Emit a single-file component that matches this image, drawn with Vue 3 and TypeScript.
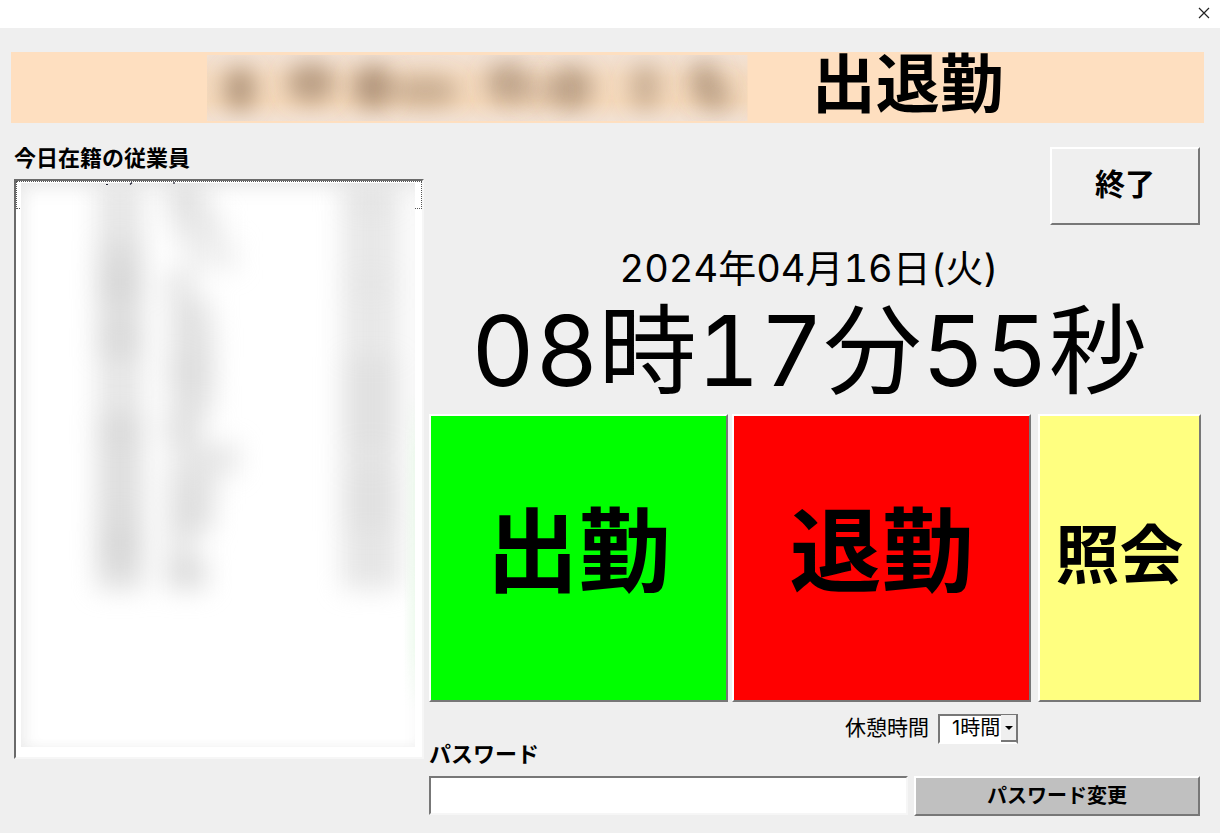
<script setup lang="ts">
import { ref } from 'vue'

interface Blob {
  cx: number
  cy: number
  rx: number
  ry: number
  o: number
}

interface Row {
  family: number
  given: number
  width: number
  indent: number
  time: number
}

const dateText = ref('2024年04月16日(火)')
const timeText = ref('08時17分55秒')
const password = ref('')
const breakTime = ref('1時間')
const breakOptions = ['なし', '1時間']

const blobs: Blob[] = [
  { cx: 33, cy: 34, rx: 16, ry: 22, o: 0.6 },
  { cx: 104, cy: 28, rx: 24, ry: 20, o: 0.55 },
  { cx: 166, cy: 32, rx: 21, ry: 22, o: 0.62 },
  { cx: 218, cy: 36, rx: 34, ry: 16, o: 0.4 },
  { cx: 300, cy: 28, rx: 22, ry: 21, o: 0.46 },
  { cx: 364, cy: 33, rx: 22, ry: 22, o: 0.5 },
  { cx: 330, cy: 36, rx: 26, ry: 16, o: 0.2 },
  { cx: 438, cy: 32, rx: 15, ry: 24, o: 0.38 },
  { cx: 497, cy: 26, rx: 15, ry: 20, o: 0.48 },
  { cx: 509, cy: 42, rx: 16, ry: 16, o: 0.38 },
]

const rows: Row[] = [
  { family: 0.5, given: 0.6, width: 40, indent: 0, time: 0.55 },
  { family: 0.5, given: 0.45, width: 50, indent: 6, time: 0.45 },
  { family: 0.7, given: 0.3, width: 54, indent: 18, time: 0.45 },
  { family: 0.8, given: 0.5, width: 28, indent: 0, time: 0.5 },
  { family: 0.65, given: 0.6, width: 40, indent: 4, time: 0.45 },
  { family: 0.75, given: 0.6, width: 44, indent: 4, time: 0.45 },
  { family: 0.5, given: 0.65, width: 46, indent: 2, time: 0.6 },
  { family: 0.5, given: 0.6, width: 42, indent: 4, time: 0.6 },
  { family: 0.75, given: 0.6, width: 36, indent: 0, time: 0.6 },
  { family: 0.65, given: 0.5, width: 68, indent: 4, time: 0.55 },
  { family: 0.65, given: 0.6, width: 48, indent: 2, time: 0.6 },
  { family: 0.7, given: 0.65, width: 44, indent: 2, time: 0.6 },
  { family: 0.8, given: 0.45, width: 32, indent: 0, time: 0.5 },
  { family: 0.65, given: 0.7, width: 40, indent: 0, time: 0.5 },
]
</script>

<template>
  <div class="window">
    <header class="titlebar">
      <button class="close" type="button" aria-label="閉じる">
        <svg width="12" height="12" viewBox="0 0 12 12" aria-hidden="true">
          <path d="M1 1 11 11M11 1 1 11" fill="none" stroke="#222" stroke-width="1.2" />
        </svg>
      </button>
    </header>

    <main class="form">
      <div class="banner">
        <svg class="company" viewBox="0 0 540 66" preserveAspectRatio="none" aria-hidden="true">
          <defs>
            <linearGradient id="haze" x1="0" y1="0" x2="0" y2="1">
              <stop offset="0" stop-color="#f2e1d3" />
              <stop offset="0.35" stop-color="#f4dabf" />
              <stop offset="0.7" stop-color="#f5d9bb" />
              <stop offset="1" stop-color="#f2e1d3" />
            </linearGradient>
            <filter id="soft" x="-100%" y="-100%" width="300%" height="300%">
              <feGaussianBlur stdDeviation="11" />
            </filter>
          </defs>
          <rect width="540" height="66" fill="url(#haze)" />
          <ellipse
            v-for="(b, i) in blobs"
            :key="i"
            :cx="b.cx"
            :cy="b.cy"
            :rx="b.rx"
            :ry="b.ry"
            :fill-opacity="b.o"
            fill="#8a6e55"
            filter="url(#soft)"
          />
        </svg>
        <h1 class="title">出退勤</h1>
      </div>

      <div class="columns">
        <section class="staff">
          <h2 id="staff-label" class="caption">今日在籍の従業員</h2>
          <div class="listbox" role="listbox" aria-labelledby="staff-label" tabindex="0">
            <div class="focus-row"></div>
            <div class="veil">
              <div class="entries">
                <div v-for="(r, i) in rows" :key="i" class="entry" role="option">
                  <span class="smudge family" :style="{ opacity: r.family }"></span>
                  <span class="given">
                    <span
                      class="smudge"
                      :style="{ opacity: r.given, width: r.width + 'px', marginLeft: r.indent + 'px' }"
                    ></span>
                  </span>
                  <span class="smudge time" :style="{ opacity: r.time }"></span>
                </div>
              </div>
              <div class="tint"></div>
            </div>
            <svg class="ticks" width="72" height="3" viewBox="0 0 72 3" aria-hidden="true">
              <path d="M0 2.5h2M24 2.5l2-2M68 0v2" stroke="#223" stroke-width="1.2" fill="none" />
            </svg>
          </div>
        </section>

        <section class="clocking">
          <button class="bevel quit" type="button">終了</button>
          <div class="date">{{ dateText }}</div>
          <div class="clock">{{ timeText }}</div>

          <div class="actions">
            <button class="bevel action in" type="button">出勤</button>
            <button class="bevel action out" type="button">退勤</button>
            <button class="bevel action query" type="button">照会</button>
          </div>

          <div class="break">
            <label for="break-time">休憩時間</label>
            <div class="combo">
              <select id="break-time" v-model="breakTime">
                <option v-for="o in breakOptions" :key="o" :value="o">{{ o }}</option>
              </select>
              <span class="arrow" aria-hidden="true">
                <svg width="8" height="4" viewBox="0 0 8 4"><path d="M0 0h8L4 4z" fill="#000" /></svg>
              </span>
            </div>
          </div>

          <label class="caption password-label" for="password">パスワード</label>
          <div class="password-row">
            <input id="password" v-model="password" type="password" />
            <button class="bevel change" type="button">パスワード変更</button>
          </div>
        </section>
      </div>
    </main>
  </div>
</template>

<style>
body {
  margin: 0;
  background: #efefef;
}
</style>

<style scoped>
.window,
.window button,
.window select,
.window input {
  font-family: Inter, "Noto Sans CJK JP", sans-serif;
  color: #000;
}

.window {
  box-sizing: border-box;
  display: flex;
  flex-direction: column;
  min-height: 100vh;
  background: #efefef;
}

.window *,
.window *::before {
  box-sizing: border-box;
}

.titlebar {
  display: flex;
  justify-content: flex-end;
  height: 28px;
  background: #fff;
}

.close {
  display: flex;
  align-items: center;
  justify-content: center;
  width: 32px;
  height: 26px;
  padding: 0;
  border: 0;
  background: transparent;
}

.form {
  flex: 1;
  display: flex;
  flex-direction: column;
  padding: 24px 16px 17px 11px;
}

.banner {
  display: grid;
  grid-template-columns: 196fr 540fr 64fr 392fr;
  align-items: center;
  height: 71px;
  background: #fedfc0;
}

.company {
  grid-column: 2;
  width: 100%;
  height: 66px;
  overflow: hidden;
}

.title {
  grid-column: 4;
  margin: 0 0 8px;
  font-size: 64px;
  line-height: 64px;
  font-weight: 700;
  white-space: nowrap;
}

.columns {
  flex: 1;
  display: grid;
  grid-template-columns: 410fr 772fr;
  gap: 5px;
  padding: 24px 3px 0;
}

.staff {
  display: flex;
  flex-direction: column;
  padding-bottom: 57px;
}

.caption {
  margin: 0;
  font-size: 22px;
  line-height: 22px;
  font-weight: 700;
}

.listbox {
  position: relative;
  flex: 1;
  display: flex;
  margin-top: 10px;
  padding: 2px 7px 10px 5px;
  background: #fff;
  border: 2px solid;
  border-color: #6a6a6a #f6f6f6 #f6f6f6 #6a6a6a;
  outline: none;
}

.focus-row {
  position: absolute;
  inset: 0 0 auto;
  height: 28px;
  border: 1px dotted #555;
}

.veil {
  position: relative;
  flex: 1;
  overflow: hidden;
  background: #fff;
  box-shadow: inset 10px 0 20px -10px #e8e8e8, inset 0 -8px 16px -12px #eee, inset 0 12px 24px -12px #e2e2e2;
}

.entries {
  filter: blur(13px);
}

.entry {
  display: grid;
  grid-template-columns: 76px 46px 23px 148px 56px;
  align-items: stretch;
  height: 29px;
}

.smudge {
  display: block;
  height: 29px;
  background: #cdcdcd;
}

.family {
  grid-column: 2;
}

.given {
  grid-column: 4;
}

.time {
  grid-column: 5;
  margin-left: 28px;
  width: 58px;
}

.tint {
  position: absolute;
  top: 210px;
  right: 0;
  bottom: 36px;
  width: 12px;
  background: linear-gradient(to right, #e4fbe400, #e4fbe480);
  mask-image: linear-gradient(to bottom, transparent, #000 20%, #000 80%, transparent);
}

.ticks {
  position: absolute;
  top: 1px;
  left: 90px;
}

.clocking {
  display: flex;
  flex-direction: column;
}

.bevel {
  padding: 0;
  border: 2px solid;
  border-color: #fff #777 #777 #fff;
  border-radius: 0;
  background: #efefef;
  font-weight: 700;
}

.quit {
  align-self: flex-end;
  width: 150px;
  height: 78px;
  margin-right: 1px;
  padding-bottom: 8px;
  font-size: 30px;
}

.date,
.clock {
  padding-right: 12px;
  text-align: center;
  white-space: nowrap;
  font-variant-numeric: tabular-nums;
}

.date {
  margin-top: 21px;
  font-size: 38px;
  line-height: 44px;
}

.clock {
  margin: 6px 0 8px;
  font-size: 98px;
  line-height: 110px;
}

.actions {
  flex: 1;
  display: grid;
  grid-template-columns: 299fr 299fr 166fr;
  gap: 4px;
  min-height: 240px;
}

.action {
  padding-bottom: 28px;
  font-size: 92px;
}

.in {
  background: #0f0;
}

.out {
  background: #f00;
}

.query {
  margin-left: 3px;
  padding-bottom: 16px;
  background: #ffff80;
  font-size: 64px;
}

.break {
  display: flex;
  align-items: center;
  justify-content: flex-end;
  gap: 9px;
  margin-top: 11px;
  padding-right: 183px;
  font-size: 21px;
  line-height: 30px;
}

.combo {
  position: relative;
  width: 80px;
  height: 30px;
}

.combo select {
  width: 100%;
  height: 100%;
  padding: 0 0 2px 12px;
  border: 2px solid;
  border-color: #777 #777 #fff #777;
  border-radius: 0;
  background: #fff;
  font-size: 20px;
  appearance: none;
}

.arrow {
  position: absolute;
  top: 2px;
  right: 0;
  display: flex;
  align-items: center;
  justify-content: center;
  width: 17px;
  height: 27px;
  background: #efefef;
  border: solid #777;
  border-width: 0 2px 2px 0;
  pointer-events: none;
}

.password-label {
  display: block;
}

.password-row {
  display: grid;
  grid-template-columns: 479fr 286fr;
  gap: 6px;
  height: 40px;
  margin-top: 11px;
  padding-right: 1px;
}

.password-row input {
  width: 100%;
  height: 39px;
  padding: 0 8px;
  border: 2px solid;
  border-color: #777 #f6f6f6 #f6f6f6 #777;
  border-radius: 0;
  background: #fff;
  font-size: 20px;
  outline: none;
}

.change {
  padding-bottom: 4px;
  background: #c0c0c0;
  font-size: 20px;
}
</style>
